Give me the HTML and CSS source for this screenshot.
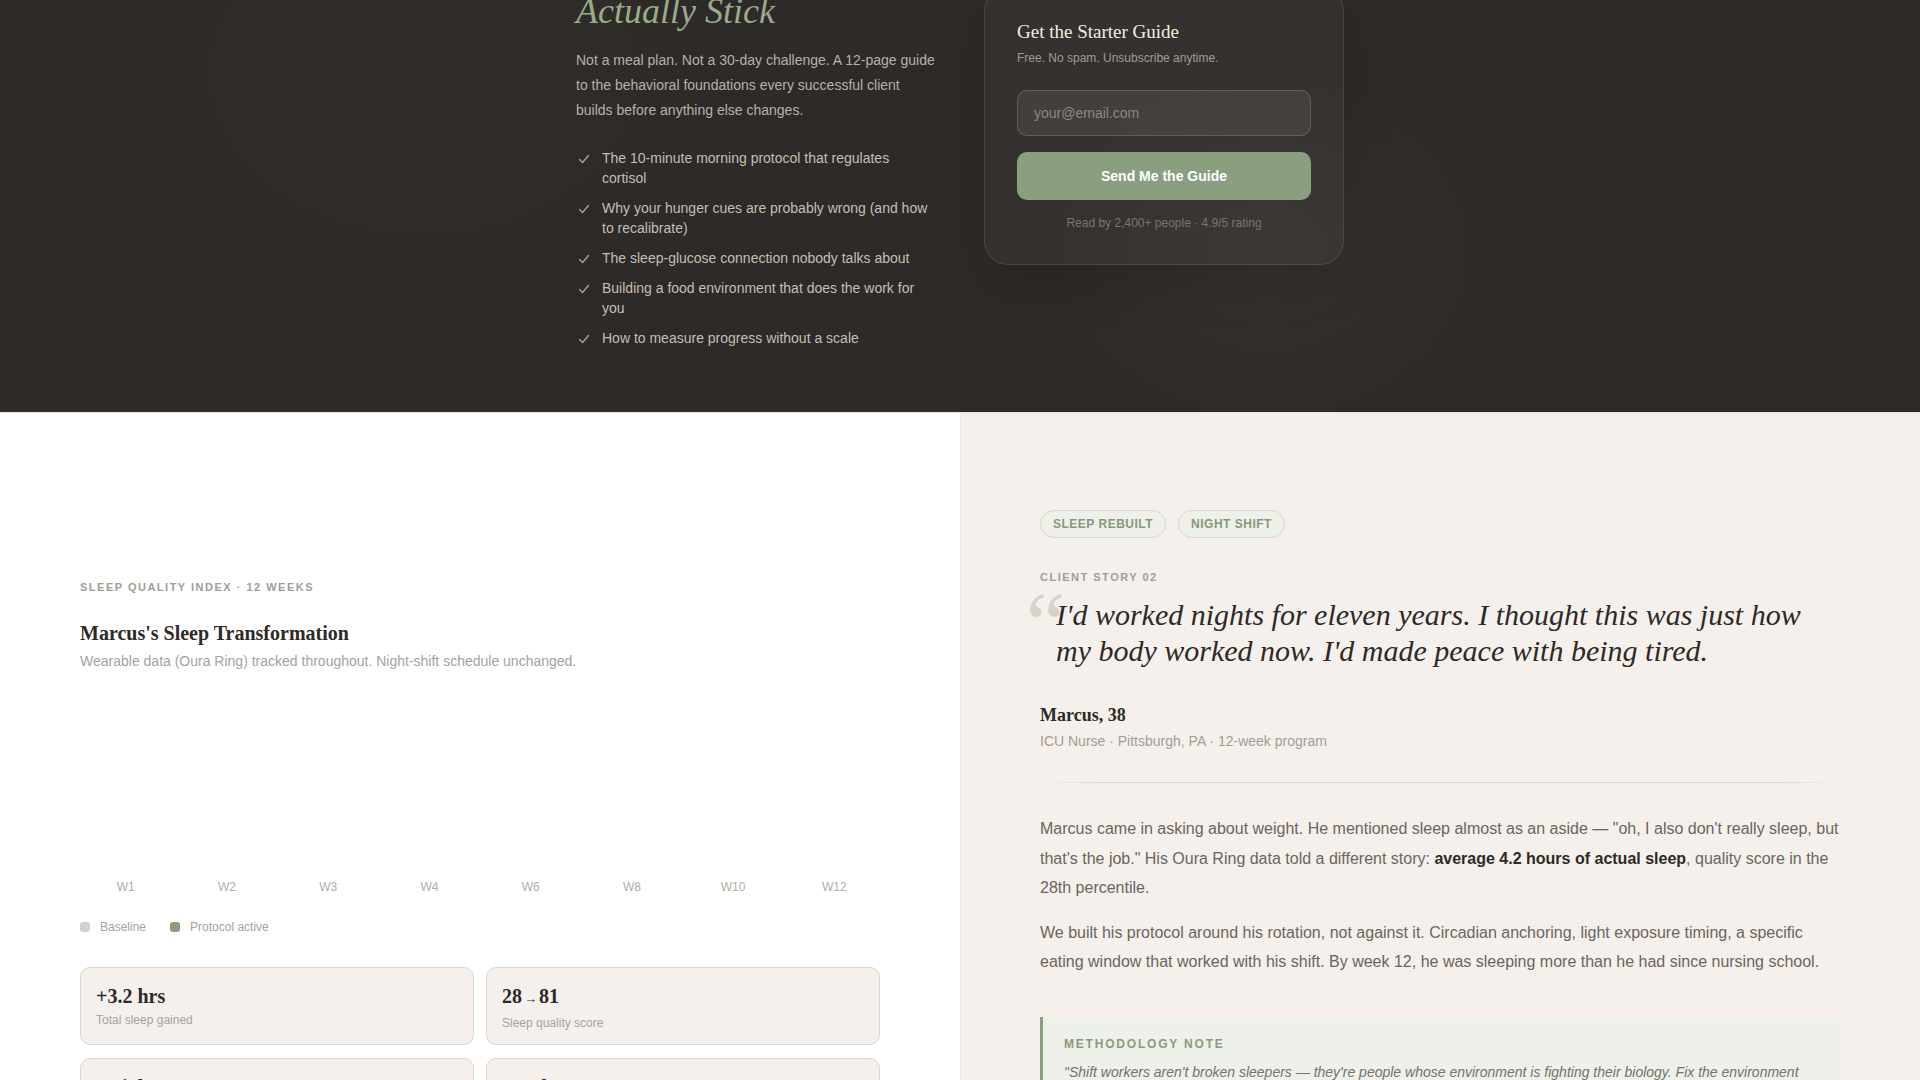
FILE: index.html
```html
<!DOCTYPE html>
<html lang="en">
<head>
  <meta charset="UTF-8" />
  <meta name="viewport" content="width=device-width, initial-scale=1.0" />
  <title>Starter Guide &amp; Client Stories</title>
  <link rel="stylesheet" href="styles.css">
</head>
<body>
  <section class="guide">
    <div class="guide-inner">
      <div class="guide-copy">
        <h2 class="guide-title">Actually Stick</h2>
        <p class="guide-lead">Not a meal plan. Not a 30-day challenge. A 12-page guide to the behavioral foundations every successful client builds before anything else changes.</p>
        <ul class="guide-list">
          <li><svg class="check" viewBox="0 0 12 12"><polyline points="1.5,6.5 4.5,9.5 10.5,2.5" /></svg><span>The 10-minute morning protocol that regulates cortisol</span></li>
          <li><svg class="check" viewBox="0 0 12 12"><polyline points="1.5,6.5 4.5,9.5 10.5,2.5" /></svg><span>Why your hunger cues are probably wrong (and how to recalibrate)</span></li>
          <li><svg class="check" viewBox="0 0 12 12"><polyline points="1.5,6.5 4.5,9.5 10.5,2.5" /></svg><span>The sleep-glucose connection nobody talks about</span></li>
          <li><svg class="check" viewBox="0 0 12 12"><polyline points="1.5,6.5 4.5,9.5 10.5,2.5" /></svg><span>Building a food environment that does the work for you</span></li>
          <li><svg class="check" viewBox="0 0 12 12"><polyline points="1.5,6.5 4.5,9.5 10.5,2.5" /></svg><span>How to measure progress without a scale</span></li>
        </ul>
      </div>

      <form class="signup-card" onsubmit="return false;">
        <h3 class="signup-title">Get the Starter Guide</h3>
        <p class="signup-sub">Free. No spam. Unsubscribe anytime.</p>
        <input class="signup-input" type="email" placeholder="your@email.com">
        <button class="signup-btn" type="submit">Send Me the Guide</button>
        <p class="signup-proof">Read by 2,400+ people · 4.9/5 rating</p>
      </form>
    </div>
  </section>

  <section class="story">
    <div class="story-data">
      <div class="eyebrow">Sleep Quality Index · 12 Weeks</div>
      <h3 class="chart-title">Marcus's Sleep Transformation</h3>
      <p class="chart-sub">Wearable data (Oura Ring) tracked throughout. Night-shift schedule unchanged.</p>

      <div class="chart">
        <div class="chart-col"><div class="bar-slot"><div class="bar bar-base" style="--h: 28%"></div></div><span class="week">W1</span></div>
        <div class="chart-col"><div class="bar-slot"><div class="bar bar-base" style="--h: 31%"></div></div><span class="week">W2</span></div>
        <div class="chart-col"><div class="bar-slot"><div class="bar" style="--h: 42%"></div></div><span class="week">W3</span></div>
        <div class="chart-col"><div class="bar-slot"><div class="bar" style="--h: 51%"></div></div><span class="week">W4</span></div>
        <div class="chart-col"><div class="bar-slot"><div class="bar" style="--h: 60%"></div></div><span class="week">W6</span></div>
        <div class="chart-col"><div class="bar-slot"><div class="bar" style="--h: 68%"></div></div><span class="week">W8</span></div>
        <div class="chart-col"><div class="bar-slot"><div class="bar" style="--h: 76%"></div></div><span class="week">W10</span></div>
        <div class="chart-col"><div class="bar-slot"><div class="bar" style="--h: 81%"></div></div><span class="week">W12</span></div>
      </div>

      <div class="legend">
        <span class="legend-item"><i class="swatch swatch-base"></i>Baseline</span>
        <span class="legend-item"><i class="swatch swatch-active"></i>Protocol active</span>
      </div>

      <div class="stats">
        <div class="stat">
          <div class="stat-value">+3.2 hrs</div>
          <div class="stat-label">Total sleep gained</div>
        </div>
        <div class="stat">
          <div class="stat-value">28<span class="arrow">→</span>81</div>
          <div class="stat-label">Sleep quality score</div>
        </div>
        <div class="stat">
          <div class="stat-value">0 nights</div>
          <div class="stat-label">Under 5 hours by week 12</div>
        </div>
        <div class="stat">
          <div class="stat-value">12 wks</div>
          <div class="stat-label">Same night-shift rotation</div>
        </div>
      </div>
    </div>

    <div class="story-text">
      <div class="tags">
        <span class="tag">Sleep Rebuilt</span>
        <span class="tag">Night Shift</span>
      </div>
      <div class="eyebrow story-label">Client Story 02</div>
      <blockquote class="story-quote">I'd worked nights for eleven years. I thought this was just how my body worked now. I'd made peace with being tired.</blockquote>
      <div class="client-name">Marcus, 38</div>
      <div class="client-meta">ICU Nurse · Pittsburgh, PA · 12-week program</div>
      <hr class="divider">
      <p class="story-body">Marcus came in asking about weight. He mentioned sleep almost as an aside — "oh, I also don't really sleep, but that's the job." His Oura Ring data told a different story: <strong>average 4.2 hours of actual sleep</strong>, quality score in the 28th percentile.</p>
      <p class="story-body">We built his protocol around his rotation, not against it. Circadian anchoring, light exposure timing, a specific eating window that worked with his shift. By week 12, he was sleeping more than he had since nursing school.</p>
      <div class="method-note">
        <div class="method-label">Methodology Note</div>
        <p class="method-text">"Shift workers aren't broken sleepers — they're people whose environment is fighting their biology. Fix the environment and the sleep follows."</p>
      </div>
    </div>
  </section>
</body>
</html>
```

FILE: styles.css
```css
* {
  margin: 0;
  padding: 0;
  box-sizing: border-box;
}

body {
  font-family: "Liberation Sans", Arial, sans-serif;
  background: #ffffff;
  color: #2d2a27;
  overflow-x: hidden;
}

/* ---------- starter guide (dark band) ---------- */

.guide {
  background:
    radial-gradient(ellipse 320px 260px at 66% 62%, rgba(255, 255, 255, 0.035), transparent 70%),
    radial-gradient(ellipse 400px 300px at 22% 20%, rgba(255, 255, 255, 0.015), transparent 70%),
    #2d2a27;
  padding-bottom: 64px;
}

.guide-inner {
  display: grid;
  grid-template-columns: 360px 360px;
  column-gap: 48px;
  justify-content: center;
  align-items: start;
  margin-top: -11px;
}

.guide-title {
  font-family: "Liberation Serif", Georgia, serif;
  font-style: italic;
  font-weight: normal;
  font-size: 36px;
  line-height: 44px;
  color: #9aab8c;
  margin-bottom: 15px;
}

.guide-lead {
  font-size: 14px;
  line-height: 25px;
  color: #b9b1a7;
}

.guide-list {
  list-style: none;
  margin-top: 25px;
}

.guide-list li {
  display: flex;
  gap: 10px;
  font-size: 14px;
  line-height: 20px;
  color: #c6bfb5;
  margin-bottom: 10px;
}

.guide-list li:last-child {
  margin-bottom: 0;
}

.check {
  flex: none;
  width: 12px;
  height: 12px;
  margin: 5px 2px 0 2px;
  fill: none;
  stroke: #9aab8c;
  stroke-width: 1.4;
  stroke-linecap: round;
  stroke-linejoin: round;
}

.signup-card {
  margin-top: -2px;
  background: rgba(255, 255, 255, 0.035);
  border: 1px solid rgba(255, 255, 255, 0.1);
  border-radius: 24px;
  padding: 32px 32px 33px;
  box-shadow: 0 20px 50px rgba(0, 0, 0, 0.12);
}

.signup-title {
  font-family: "Liberation Serif", Georgia, serif;
  font-weight: normal;
  font-size: 19px;
  line-height: 24px;
  color: #f2ede6;
}

.signup-sub {
  font-size: 12px;
  line-height: 16px;
  color: #a39b92;
  margin-top: 6px;
}

.signup-input {
  display: block;
  width: 100%;
  height: 46px;
  margin-top: 24px;
  padding: 0 16px;
  font-family: inherit;
  font-size: 14px;
  color: #f2ede6;
  background: rgba(255, 255, 255, 0.07);
  border: 1px solid rgba(255, 255, 255, 0.16);
  border-radius: 10px;
  outline: none;
}

.signup-input::placeholder {
  color: #8f877e;
}

.signup-btn {
  display: block;
  width: 100%;
  height: 48px;
  margin-top: 16px;
  font-family: inherit;
  font-size: 14px;
  font-weight: bold;
  color: #ffffff;
  background: #8a9e80;
  border: none;
  border-radius: 10px;
  cursor: pointer;
}

.signup-proof {
  text-align: center;
  font-size: 12px;
  line-height: 16px;
  color: #7b746c;
  margin-top: 15px;
}

/* ---------- client story ---------- */

.story {
  display: grid;
  grid-template-columns: 1fr 1fr;
  border-top: 1px solid #e6e1da;
}

.eyebrow {
  font-size: 11px;
  line-height: 14px;
  font-weight: bold;
  letter-spacing: 1.5px;
  text-transform: uppercase;
  color: #a39d96;
}

.story-data {
  padding: 167px 80px 80px;
  background: #ffffff;
}

.chart-title {
  font-family: "Liberation Serif", Georgia, serif;
  font-size: 20px;
  line-height: 26px;
  margin-top: 26px;
  color: #2d2a27;
}

.chart-sub {
  font-size: 14px;
  line-height: 20px;
  color: #a8a29c;
  margin-top: 5px;
}

.chart {
  display: grid;
  grid-template-columns: repeat(8, 1fr);
  column-gap: 10px;
  margin-top: 32px;
}

.chart-col {
  display: flex;
  flex-direction: column;
  align-items: center;
}

.bar-slot {
  width: 100%;
  height: 164px;
  display: flex;
  align-items: flex-end;
}

.bar {
  width: 100%;
  height: 0;
  background: #8a9e80;
  border-radius: 6px 6px 0 0;
  transition: height 0.8s ease;
}

.bar-base {
  background: #d4d0cc;
}

.chart.is-visible .bar {
  height: var(--h);
}

.week {
  margin-top: 12px;
  font-size: 12px;
  line-height: 16px;
  color: #b3ada6;
}

.legend {
  display: flex;
  gap: 24px;
  margin-top: 24px;
}

.legend-item {
  display: flex;
  align-items: center;
  gap: 10px;
  font-size: 12px;
  line-height: 16px;
  color: #a8a29c;
}

.swatch {
  width: 10px;
  height: 10px;
  border-radius: 3px;
}

.swatch-base {
  background: #d4d0cc;
}

.swatch-active {
  background: #8a9e80;
}

.stats {
  display: grid;
  grid-template-columns: 1fr 1fr;
  gap: 13px 12px;
  margin-top: 32px;
}

.stat {
  background: #f5f0eb;
  border: 1px solid #ddd6ce;
  border-radius: 10px;
  padding: 16px 15px 13px;
}

.stat-value {
  font-family: "Liberation Serif", Georgia, serif;
  font-weight: bold;
  font-size: 20px;
  line-height: 24px;
  color: #2d2a27;
}

.arrow {
  font-size: 13px;
  margin: 0 2px;
}

.stat-label {
  font-size: 12px;
  line-height: 16px;
  color: #a8a29c;
  margin-top: 4px;
}

.story-text {
  background: #f5f0eb;
  border-left: 1px solid #ebe5de;
  padding: 97px 80px 80px 79px;
}

.tags {
  display: flex;
  gap: 12px;
}

.tag {
  display: inline-flex;
  align-items: center;
  height: 28px;
  padding: 0 12px;
  font-size: 12px;
  font-weight: bold;
  letter-spacing: 0.5px;
  text-transform: uppercase;
  color: #869879;
  background: #eef0e9;
  border: 1px solid #d3dacb;
  border-radius: 14px;
}

.story-label {
  margin-top: 32px;
}

.story-quote {
  position: relative;
  margin-top: 13px;
  padding-left: 16px;
  font-family: "Liberation Serif", Georgia, serif;
  font-style: italic;
  font-size: 30px;
  line-height: 36px;
  color: #2d2a27;
}

.story-quote::before {
  content: "\201C";
  position: absolute;
  left: -14px;
  top: -17px;
  font-size: 88px;
  line-height: 1;
  font-style: normal;
  color: #d8d2ca;
}

.client-name {
  font-family: "Liberation Serif", Georgia, serif;
  font-weight: bold;
  font-size: 18px;
  line-height: 24px;
  margin-top: 34px;
  color: #2d2a27;
}

.client-meta {
  font-size: 14px;
  line-height: 20px;
  margin-top: 4px;
  color: #a39d96;
}

.divider {
  border: none;
  height: 1px;
  margin: 31px 0 31px;
  background: linear-gradient(90deg, transparent, #ddd6cd 8%, #ddd6cd 92%, transparent);
}

.story-body {
  font-size: 16px;
  line-height: 29.5px;
  color: #6b655f;
  margin-bottom: 15px;
}

.story-body strong {
  color: #2d2a27;
}

.method-note {
  margin-top: 40px;
  padding: 19px 24px 20px 21px;
  background: #eef0ea;
  border-left: 3px solid #8a9e80;
}

.method-label {
  font-size: 12px;
  line-height: 16px;
  font-weight: bold;
  letter-spacing: 1.8px;
  text-transform: uppercase;
  color: #8a9a80;
}

.method-text {
  margin-top: 9px;
  font-size: 14px;
  line-height: 22px;
  font-style: italic;
  color: #77716b;
}
```
